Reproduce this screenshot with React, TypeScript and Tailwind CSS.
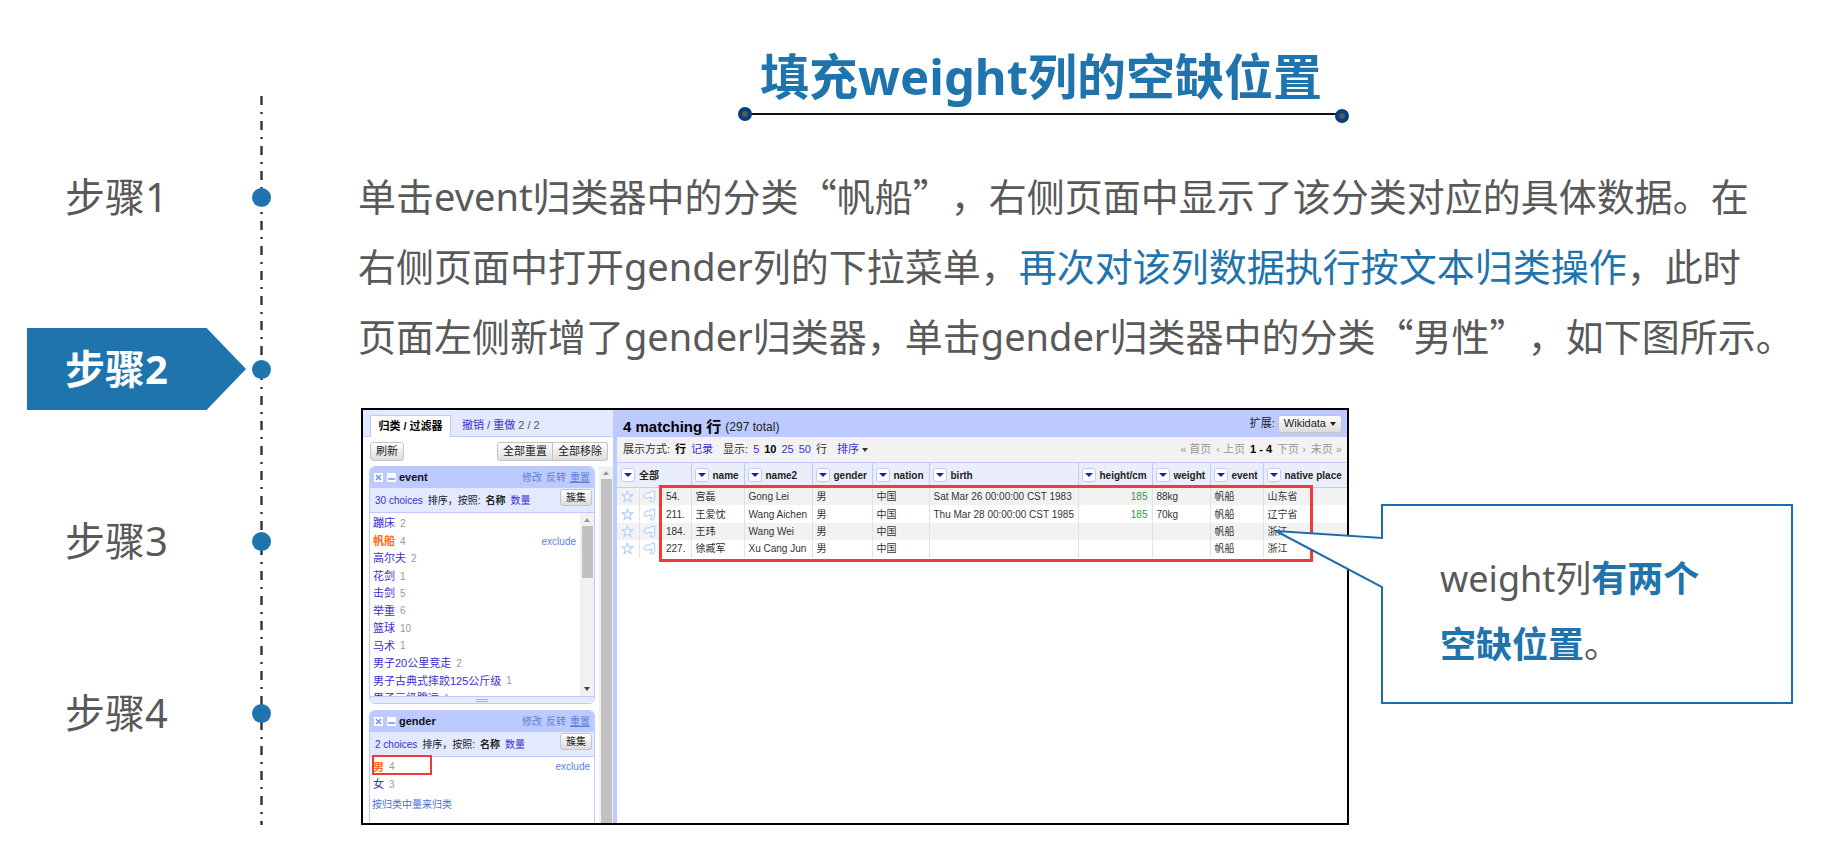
import { clsx } from 'clsx'

const STEPS = ['步骤1', '步骤2', '步骤3', '步骤4']
const ACTIVE_STEP = 1

const EVENT_CHOICES = [
  { name: '蹦床', count: 2 },
  { name: '帆船', count: 4, selected: true },
  { name: '高尔夫', count: 2 },
  { name: '花剑', count: 1 },
  { name: '击剑', count: 5 },
  { name: '举重', count: 6 },
  { name: '篮球', count: 10 },
  { name: '马术', count: 1 },
  { name: '男子20公里竞走', count: 2 },
  { name: '男子古典式摔跤125公斤级', count: 1 },
  { name: '男子三级跳远', count: 1 },
]

const COLUMNS = ['name', 'name2', 'gender', 'nation', 'birth', 'height/cm', 'weight', 'event', 'native place']

const ROWS = [
  ['54.', '宫磊', 'Gong Lei', '男', '中国', 'Sat Mar 26 00:00:00 CST 1983', '185', '88kg', '帆船', '山东省'],
  ['211.', '王爱忱', 'Wang Aichen', '男', '中国', 'Thu Mar 28 00:00:00 CST 1985', '185', '70kg', '帆船', '辽宁省'],
  ['184.', '王玮', 'Wang Wei', '男', '中国', '', '', '', '帆船', '浙江'],
  ['227.', '徐臧军', 'Xu Cang Jun', '男', '中国', '', '', '', '帆船', '浙江'],
]

const buttonStyle =
  'rounded-[3px] border border-[#c4c4c4] bg-linear-to-b from-white to-[#dcdcdc] text-[#222] whitespace-nowrap'

function Caret({ className = 'w-[6px]' }: { className?: string }) {
  return (
    <svg viewBox="0 0 8 4" preserveAspectRatio="none" className={clsx('inline-block h-1', className)}>
      <path d="M0 0h8L4 4z" fill="currentColor" />
    </svg>
  )
}

function Timeline() {
  return (
    <nav className="relative w-[271px] shrink-0 pt-[111px]">
      <svg className="absolute top-24 right-[8px] h-[729px] w-[3px]">
        <line x1="1.5" y1="0" x2="1.5" y2="729" stroke="#333" strokeWidth="2.4" strokeDasharray="9 7 2 7" />
      </svg>
      <ol>
        {STEPS.map((step, i) => (
          <li key={step} className="flex h-[172px] items-center justify-between pl-[27px]">
            <a
              href={`#step-${i + 1}`}
              className={clsx(
                'flex h-[82px] w-[219px] items-center pl-[38px] text-[40px]',
                i === ACTIVE_STEP
                  ? 'bg-[#1f74ad] font-bold text-white [clip-path:polygon(0_0,82%_0,100%_50%,82%_100%,0_100%)]'
                  : 'text-[#595959]',
              )}
            >
              {step}
            </a>
            <span className="relative size-[19px] rounded-full bg-[#1f74ad]" />
          </li>
        ))}
      </ol>
    </nav>
  )
}

function Title() {
  return (
    <header className="flex flex-col items-center pt-[45px] pr-[6px]">
      <h1 className="pr-[6px] text-[49px] leading-[62px] font-bold text-[#1f74ad]">填充weight列的空缺位置</h1>
      <svg viewBox="0 1 614 20" className="h-5 w-[614px]">
        <path d="M8 8H606" stroke="#111" strokeWidth="2" />
        <circle cx="8" cy="8" r="5" fill="#595959" stroke="#04407a" strokeWidth="4" />
        <circle cx="605" cy="10" r="5" fill="#595959" stroke="#04407a" strokeWidth="4" />
      </svg>
    </header>
  )
}

function FacetHeader({ name, choices }: { name: string; choices: number }) {
  return (
    <>
      <div className="flex h-[21px] items-center bg-[#bccaff] pr-1 pl-1 text-[10px]">
        <button aria-label={`remove ${name}`} className="flex size-[9px] items-center justify-center bg-white text-[#6f93e6]">
          <svg viewBox="0 0 9 9" className="size-[9px]">
            <path d="M2 2l5 5M7 2l-5 5" stroke="currentColor" strokeWidth="1.5" />
          </svg>
        </button>
        <button aria-label={`minimize ${name}`} className="ml-1 flex size-[9px] bg-white text-[#6f93e6]">
          <svg viewBox="0 0 9 9" className="size-[9px]">
            <path d="M1 6h7" stroke="currentColor" strokeWidth="1.5" />
          </svg>
        </button>
        <h2 className="ml-[3px] flex-1 text-[11px] font-bold text-[#111]">{name}</h2>
        <div className="flex gap-1 text-[#5c7fdb]">
          <a href="#change">修改</a>
          <a href="#invert">反转</a>
          <a href="#reset" className="underline">重置</a>
        </div>
      </div>
      <div className="flex h-[25px] items-center border-b border-[#bccaff] bg-[#e3e9ff] pr-[2px] pl-[5px] text-[10px] text-[#222]">
        <a href="#choices" className="text-[#3a2fd0]">{choices} choices</a>
        <span className="ml-[5px]">排序，按照:</span>
        <b className="ml-[5px]">名称</b>
        <a href="#count" className="ml-[5px] text-[#3a2fd0]">数量</a>
        <button className={clsx(buttonStyle, 'mb-[6px] ml-auto h-[17px] px-[5px] leading-[15px]')}>簇集</button>
      </div>
    </>
  )
}

function Choice({ name, count, selected }: { name: string; count: number; selected?: boolean }) {
  return (
    <li className="flex items-center gap-[5px] whitespace-nowrap">
      <a href="#choice" className={clsx('text-[11px]', selected ? 'font-bold text-[#ff6a1a]' : 'text-[#3a2fd0]')}>
        {name}
      </a>
      <span className="text-[10px] text-[#999]">{count}</span>
      {selected && <a href="#exclude" className="ml-auto text-[10px] text-[#5c7fdb]">exclude</a>}
    </li>
  )
}

function FacetPanel() {
  return (
    <aside className="flex w-[250px] shrink-0 flex-col">
      <div className="flex h-[27px] items-end border-b border-[#bccaff] bg-[#e3e9ff] pl-[7px] text-[11px]">
        <button className="-mb-px h-[22px] w-[81px] border border-b-0 border-[#bccaff] bg-white font-bold whitespace-nowrap text-black">
          归类 / 过滤器
        </button>
        <button className="ml-[11px] h-[22px] whitespace-nowrap text-[#3a2fd0]">
          撤销 / 重做 <span className="text-[#555]">2 / 2</span>
        </button>
      </div>
      <div className="flex h-[29px] items-center pr-[5px] pl-[7px] text-[11px]">
        <button className={clsx(buttonStyle, 'h-[19px] px-[5px] leading-[17px]')}>刷新</button>
        <button className={clsx(buttonStyle, 'ml-auto h-[19px] rounded-r-none px-[5px] leading-[17px]')}>全部重置</button>
        <button className={clsx(buttonStyle, 'h-[19px] rounded-l-none border-l-0 px-[5px] leading-[17px]')}>全部移除</button>
      </div>
      <div className="flex min-h-0 flex-1">
        <div className="flex min-w-0 flex-1 flex-col gap-[6px] overflow-hidden pr-1 pl-[6px]">
          <section className="shrink-0 overflow-hidden rounded-[6px] border border-[#bccaff]">
            <FacetHeader name="event" choices={30} />
            <div className="flex h-[183px] overflow-hidden">
              <ul className="grid h-[194px] flex-1 grid-rows-11 pt-[2px] pr-1 pl-[3px]">
                {EVENT_CHOICES.map((choice) => (
                  <Choice key={choice.name} {...choice} />
                ))}
              </ul>
              <div className="flex w-[14px] flex-col items-center justify-between bg-[#f1f1f1] py-[5px]">
                <div className="flex flex-col items-center gap-1 text-[#999]">
                  <Caret className="w-[6px] rotate-180" />
                  <div className="h-[52px] w-[11px] bg-[#c1c1c1]" />
                </div>
                <Caret className="w-[6px] text-[#444]" />
              </div>
            </div>
            <div className="flex h-[7px] items-center justify-center border-t border-[#bccaff] bg-[#e3e9ff]">
              <span className="h-[3px] w-3 border-y border-[#9db6f5]" />
            </div>
          </section>
          <section className="shrink-0 overflow-hidden rounded-t-[6px] border border-b-0 border-[#bccaff]">
            <FacetHeader name="gender" choices={2} />
            <ul className="relative grid h-[36px] grid-rows-2 pt-px pr-1 pl-[3px]">
              <Choice name="男" count={4} selected />
              <Choice name="女" count={3} />
              <span className="pointer-events-none absolute -top-[2px] left-[2px] h-5 w-[60px] border-2 border-[#f03a3a]" />
            </ul>
            <a href="#by-count" className="block h-10 pt-1 pl-[2px] text-[10px] text-[#4a6fd8]">按归类中量来归类</a>
          </section>
        </div>
        <div className="flex w-[14px] flex-col items-center bg-[#f1f1f1] pt-[5px] text-[#999]">
          <Caret className="mb-1 w-[6px] shrink-0 rotate-180" />
          <div className="w-[11px] flex-1 bg-[#c1c1c1]" />
        </div>
      </div>
    </aside>
  )
}

function MenuButton({ label }: { label: string }) {
  return (
    <button
      aria-label={label}
      className="inline-flex size-[14px] shrink-0 items-center justify-center rounded-[3px] border border-[#bccaff] bg-white text-[#1a1ac8]"
    >
      <Caret className="w-2" />
    </button>
  )
}

function DataTable() {
  return (
    <div className="relative">
      <table className="w-full table-fixed border-collapse text-left text-[10px] whitespace-nowrap text-[#333]">
        <colgroup>
          <col className="w-[22px]" />
          <col className="w-[21px]" />
          <col className="w-[31px]" />
          <col className="w-[53px]" />
          <col className="w-[68px]" />
          <col className="w-[60px]" />
          <col className="w-[57px]" />
          <col className="w-[149px]" />
          <col className="w-[74px]" />
          <col className="w-[58px]" />
          <col className="w-[53px]" />
          <col />
        </colgroup>
        <thead>
          <tr className="h-[25px] border-y border-[#bccaff] bg-[#eaeefb] text-[#222]">
            <th colSpan={3} className="border-r border-[#bccaff] px-1">
              <span className="flex items-center gap-1">
                <MenuButton label="全部" />
                全部
              </span>
            </th>
            {COLUMNS.map((column) => (
              <th key={column} className="border-r border-[#bccaff] px-[3px] last:border-r-0">
                <span className="flex items-center gap-1">
                  <MenuButton label={column} />
                  {column}
                </span>
              </th>
            ))}
          </tr>
        </thead>
        <tbody className="h-[70px]">
          {ROWS.map((row) => (
            <tr key={row[0]} className="odd:bg-[#f2f2f2]">
              <td className="border-r border-[#e2e2e2] p-0">
                <svg viewBox="0 0 14 14" className="mx-auto size-[13px]">
                  <path
                    d="M7 1.2l1.5 4h4.3L9.4 7.8l1.3 4.6L7 9.7l-3.7 2.7 1.3-4.6L1.2 5.2h4.3z"
                    fill="#fff"
                    stroke="#b5d0ff"
                    strokeWidth="1.2"
                  />
                </svg>
              </td>
              <td className="p-0">
                <svg viewBox="0 0 14 14" className="mx-auto size-[13px]">
                  <path
                    d="M12.5 1.5v9L11 13l-3-.5.5-2L10 8H5.5l-2 1-2-1L1 6l1.500-1L3 3.500 5 3l2 .5 2.500-2z"
                    fill="#fff"
                    stroke="#b5d0ff"
                    strokeWidth="1.2"
                    strokeLinejoin="round"
                  />
                </svg>
              </td>
              {row.map((value, i) => (
                <td
                  key={i}
                  className={clsx(
                    'border-r border-[#e2e2e2] py-0 pr-1 last:border-r-0',
                    i === 0 ? 'pl-[6px]' : 'pl-1',
                    i === 6 && 'text-right text-[#2f9a3f]',
                  )}
                >
                  {value}
                </td>
              ))}
            </tr>
          ))}
        </tbody>
      </table>
      <span className="pointer-events-none absolute top-[23px] right-[34px] left-[42px] h-[77px] border-[3px] border-[#f53838]" />
    </div>
  )
}

function RefineWindow() {
  return (
    <div className="flex h-[417px] min-w-0 flex-1 overflow-hidden border-2 border-black bg-white font-['Liberation_Sans','Noto_Sans_CJK_SC',sans-serif]">
      <FacetPanel />
      <main className="min-w-0 flex-1 border-l-4 border-[#bccaff]">
        <div className="flex h-[27px] items-center bg-[#bccaff] pr-[5px] pl-[6px] text-[11px]">
          <div className="flex items-center gap-1 pt-[6px] leading-[20px]">
            <h2 className="text-[15px] font-bold text-black">4 matching 行</h2>
            <span className="text-[12px] text-[#222]">(297 total)</span>
          </div>
          <span className="ml-auto text-[#222]">扩展:</span>
          <button className={clsx(buttonStyle, 'ml-[3px] flex h-[18px] items-center gap-1 px-[5px]')}>
            Wikidata <Caret />
          </button>
        </div>
        <div className="flex h-[25px] items-center bg-[#f2f2f2] pr-[5px] pl-[6px] text-[11px] text-[#333]">
          <span>展示方式:</span>
          <b className="ml-[5px] text-black">行</b>
          <a href="#records" className="ml-[5px] text-[#3a2fd0]">记录</a>
          <span className="ml-[10px]">显示:</span>
          <div className="ml-[5px] flex gap-[5px] text-[#3a2fd0]">
            <a href="#5">5</a>
            <b className="text-black">10</b>
            <a href="#25">25</a>
            <a href="#50">50</a>
          </div>
          <span className="ml-[5px]">行</span>
          <a href="#sort" className="ml-[10px] flex items-center gap-[3px] text-[#3a2fd0]">
            排序 <Caret className="w-[6px] text-[#333]" />
          </a>
          <div className="ml-auto flex gap-[5px] text-[#999]">
            <span>« 首页</span>
            <span>‹ 上页</span>
            <b className="text-black">1 - 4</b>
            <span>下页 ›</span>
            <span>末页 »</span>
          </div>
        </div>
        <DataTable />
      </main>
    </div>
  )
}

function Callout() {
  return (
    <div className="relative mt-24 ml-8 h-[200px] w-[412px] shrink-0 border-2 border-[#1a6db5] bg-white pt-[40px] pl-[57px]">
      {/* pointer, covers the part of the left border it opens into */}
      <svg viewBox="0 0 110 90" className="absolute top-[22px] -left-[109px] h-[90px] w-[110px]">
        <path d="M110 10h-2L2 3l106 56h2z" fill="#fff" />
        <path d="M108 6v4L2 3l106 56v4" fill="none" stroke="#1a6db5" strokeWidth="2" />
      </svg>
      <p className="text-[36px] leading-[66px] text-[#595959]">
        weight列<b className="font-bold text-[#1f74ad]">有两个<br />空缺位置</b>。
      </p>
    </div>
  )
}

// full-width quotation marks come from the CJK face
function Quoted({ children }: { children: string }) {
  return <span className="font-['Noto_Sans_CJK_SC',sans-serif] leading-none">“{children}”</span>
}

export default function App() {
  return (
    <div
      lang="zh-CN"
      className="flex min-h-screen bg-white font-['Noto_Sans','Noto_Sans_CJK_SC',sans-serif] [text-spacing-trim:space-all]"
    >
      <Timeline />
      <div className="min-w-0 flex-1">
        <Title />
        <p className="pt-[34px] pl-[87px] text-[38px] leading-[70px] whitespace-nowrap text-[#595959]">
          单击event归类器中的分类<Quoted>帆船</Quoted>，右侧页面中显示了该分类对应的具体数据。在
          <br />
          右侧页面中打开gender列的下拉菜单，<span className="text-[#1f74ad]">再次对该列数据执行按文本归类操作</span>，此时
          <br />
          页面左侧新增了gender归类器，单击gender归类器中的分类<Quoted>男性</Quoted>，如下图所示。
        </p>
        <div className="flex pt-[37px] pr-[30px] pl-[90px]">
          <RefineWindow />
          <Callout />
        </div>
      </div>
    </div>
  )
}
